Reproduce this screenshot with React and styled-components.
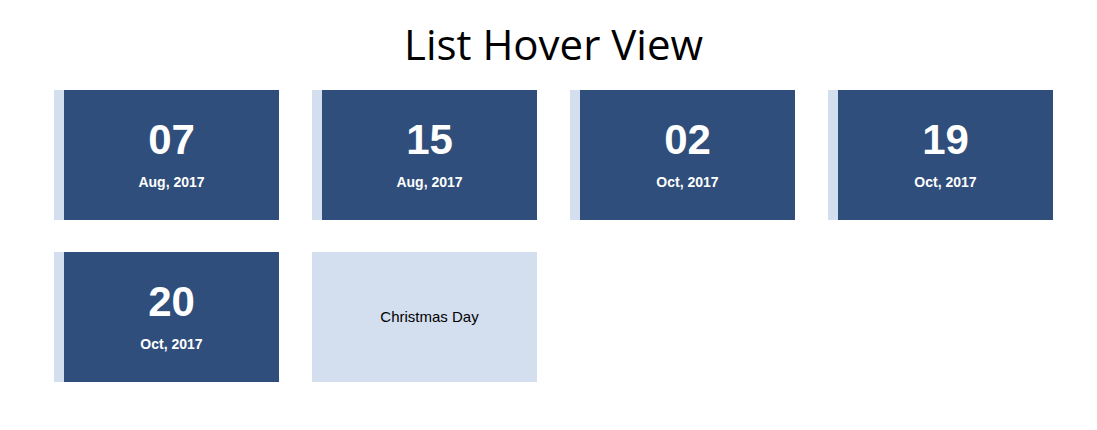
import React from "react";
import styled, { createGlobalStyle } from "styled-components";

const GlobalStyle = createGlobalStyle`
  body {
    margin: 0;
    background: #fff;
    font-family: "Liberation Sans", Arial, sans-serif;
  }
`;

const Page = styled.div`
  width: 999px;
  padding: 18px 0 0 54px;
`;

const Title = styled.h1`
  margin: 0 0 20px;
  text-align: center;
  font-family: "Open Sans", "Noto Sans", sans-serif;
  font-weight: 400;
  font-size: 42px;
  line-height: 52px;
  color: #000;
`;

const Grid = styled.div`
  display: grid;
  grid-template-columns: repeat(4, 225px);
  column-gap: 33px;
  row-gap: 32px;
`;

const Card = styled.div`
  height: 130px;
  display: flex;
  flex-direction: column;
  align-items: center;
  justify-content: center;
  box-sizing: border-box;
  background: ${(p) => (p.$holiday ? "#d3deee" : "#2f4e7b")};
  border-left: 10px solid #d3deee;
  color: ${(p) => (p.$holiday ? "#000" : "#fff")};
`;

const Day = styled.div`
  font-weight: 700;
  font-size: 42px;
  line-height: 44px;
  margin-top: -3px;
`;

const Month = styled.div`
  font-weight: 700;
  font-size: 14px;
  line-height: 16px;
  margin-top: 12px;
`;

const Holiday = styled.div`
  font-size: 15px;
  line-height: 16px;
`;

const dates = [
  { day: "07", month: "Aug, 2017" },
  { day: "15", month: "Aug, 2017" },
  { day: "02", month: "Oct, 2017" },
  { day: "19", month: "Oct, 2017" },
  { day: "20", month: "Oct, 2017" },
];

export default function App() {
  return (
    <>
      <GlobalStyle />
      <Page>
        <Title>List Hover View</Title>
        <Grid>
          {dates.map((d, i) => (
            <Card key={i}>
              <Day>{d.day}</Day>
              <Month>{d.month}</Month>
            </Card>
          ))}
          <Card $holiday>
            <Holiday>Christmas Day</Holiday>
          </Card>
        </Grid>
      </Page>
    </>
  );
}
